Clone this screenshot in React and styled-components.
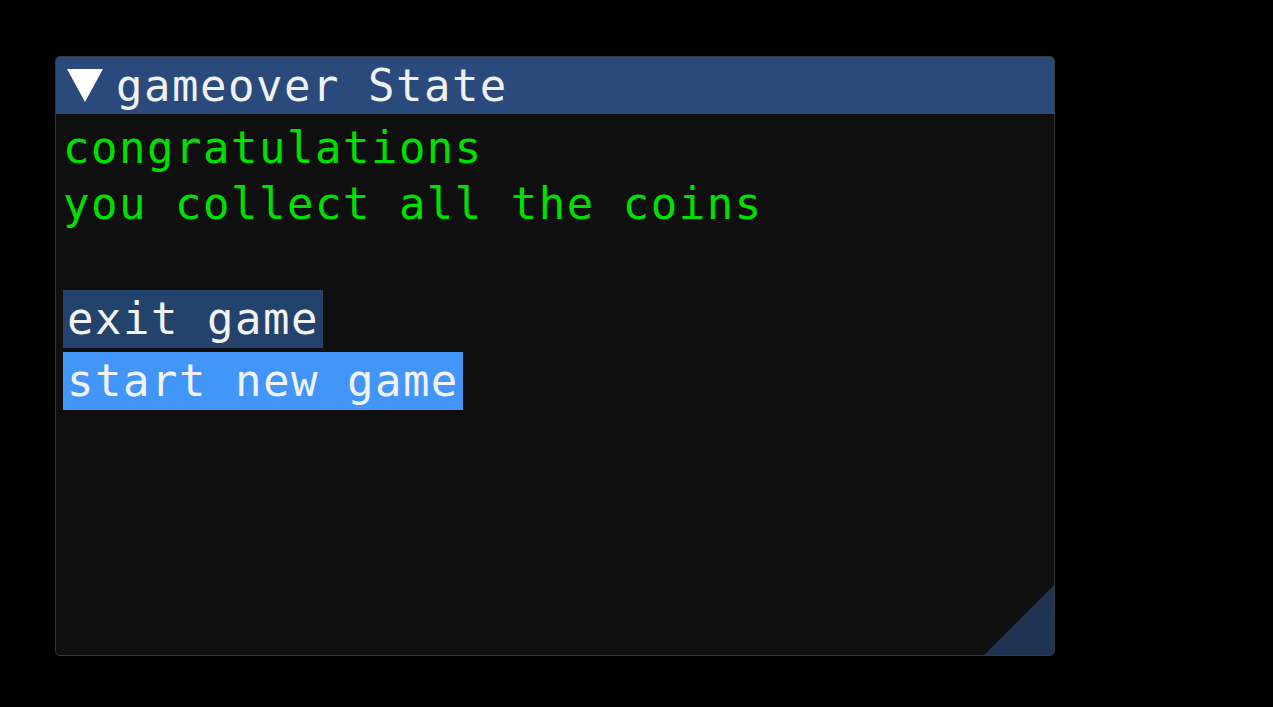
import React from 'react';
import styled, { createGlobalStyle } from 'styled-components';

const Global = createGlobalStyle`
	html, body {
		margin: 0;
		padding: 0;
		background: #000;
	}
	body {
		width: 1273px;
		height: 707px;
		overflow: hidden;
	}
`

const Page = styled.div`
	padding: 56px 0 0 55px;
	font-family: "DejaVu Sans Mono", "Liberation Mono", monospace;
	font-size: 44px;
	letter-spacing: 1.5px;
`

const Window = styled.div`
	position: relative;
	width: 1000px;
	height: 600px;
	box-sizing: border-box;
	border: 1px solid #37373f;
	border-radius: 5px;
	background: #0f0f0f;
	overflow: hidden;
	display: flex;
	flex-direction: column;
`

const TitleBar = styled.div`
	height: 57px;
	display: flex;
	align-items: center;
	padding-left: 11px;
	gap: 13px;
	background: #294a7a;
	color: #f0f0f0;
	line-height: 58px;
	white-space: pre;
`

const Body = styled.div`
	flex: 1;
	display: flex;
	flex-direction: column;
	align-items: flex-start;
	padding: 6px 7px 0;
`

const Line = styled.div`
	height: ${props => props.blank ? '58px' : '56px'};
	line-height: 56px;
	color: ${props => props.color || '#00e000'};
	white-space: pre;
`

const Selectable = styled.div`
	height: 58px;
	line-height: 58px;
	padding: 0 4px;
	margin-bottom: 4px;
	color: #f2f2f2;
	white-space: pre;
	background: ${props => props.active ? '#4296fa' : '#23436c'};
`

const Grip = styled.svg`
	position: absolute;
	right: 0;
	bottom: 0;
`

const Arrow = () => (
	<svg width="36" height="34" viewBox="0 0 36 34">
		<polygon points="0,0 36,0 18,33" fill="#ffffff" />
	</svg>
)

export default function App() {
	return (
		<Page>
			<Global />
			<Window>
				<TitleBar>
					<Arrow />
					<span>gameover State</span>
				</TitleBar>
				<Body>
					<Line>congratulations</Line>
					<Line>you collect all the coins</Line>
					<Line blank> </Line>
					<Selectable>exit game</Selectable>
					<Selectable active>start new game</Selectable>
				</Body>
				<Grip width="70" height="70" viewBox="0 0 70 70">
					<polygon points="70,0 70,70 0,70" fill="#1e3450" />
				</Grip>
			</Window>
		</Page>
	);
}
